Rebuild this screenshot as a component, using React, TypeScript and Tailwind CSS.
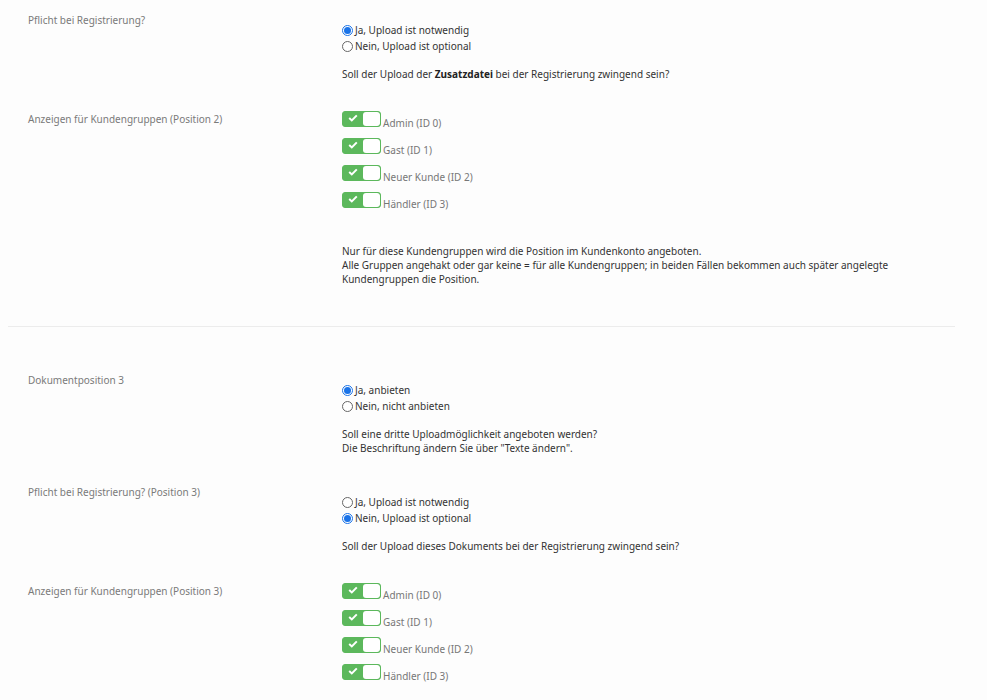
import React from "react";

function Radio({ checked, label }: { checked?: boolean; label: string }) {
  return (
    <div className="flex h-4 items-center">
      {checked ? (
        <span className="flex h-[11px] w-[11px] shrink-0 items-center justify-center rounded-full border border-[#1a73e8] bg-white">
          <span className="h-[7px] w-[7px] rounded-full bg-[#1a73e8]" />
        </span>
      ) : (
        <span className="h-[11px] w-[11px] shrink-0 rounded-full border border-[#666] bg-white" />
      )}
      <span className="ml-[2px] text-[#333]">{label}</span>
    </div>
  );
}

function Toggle({ label }: { label: string }) {
  return (
    <div className="h-[27px] leading-4">
      <span className="inline-block h-4 w-[39px] overflow-hidden rounded-[3px] border border-[#5cb85c] bg-[#5cb85c] align-baseline">
        <span className="flex h-full">
          <span className="flex w-[20px] items-center justify-center">
            <svg width="10" height="8" viewBox="0 0 10 8" className="-mt-[2px]">
              <path d="M1.2 4 L3.8 6.4 L8.8 1.4" fill="none" stroke="white" strokeWidth="2" />
            </svg>
          </span>
          <span className="flex-1 rounded-[3px] bg-white" />
        </span>
      </span>
      <span className="ml-[2px] text-[#777]">{label}</span>
    </div>
  );
}

function Row({
  label,
  children,
  className,
  contentClass,
}: {
  label: string;
  children: React.ReactNode;
  className?: string;
  contentClass?: string;
}) {
  return (
    <div className={"flex " + (className ?? "")}>
      <div className="w-[334px] shrink-0 pl-5 leading-4 text-[#7a7a7a]">{label}</div>
      <div className={"w-[585px] " + (contentClass ?? "")}>{children}</div>
    </div>
  );
}

const groups = ["Admin (ID 0)", "Gast (ID 1)", "Neuer Kunde (ID 2)", "Händler (ID 3)"];

export default function App() {
  return (
    <div
      className="min-h-screen bg-[#fdfdfd] text-[10px]"
      style={{ fontFamily: '"Noto Sans", "Open Sans", sans-serif' }}
    >
      <div className="w-[963px] px-2 pb-6">
        <Row label="Pflicht bei Registrierung?" className="pt-3" contentClass="pt-[10px]">
          <Radio checked label="Ja, Upload ist notwendig" />
          <Radio label="Nein, Upload ist optional" />
          <p className="mt-[13px] leading-[14px] text-[#333]">
            Soll der Upload der <b className="font-bold text-[#222]">Zusatzdatei</b> bei der Registrierung zwingend sein?
          </p>
        </Row>

        <Row label="Anzeigen für Kundengruppen (Position 2)" className="mt-[30px]">
          {groups.map((g) => (
            <Toggle key={g} label={g} />
          ))}
          <p className="mt-[25px] leading-[14px] text-[#333]">
            Nur für diese Kundengruppen wird die Position im Kundenkonto angeboten.
            <br />
            Alle Gruppen angehakt oder gar keine = für alle Kundengruppen; in beiden Fällen bekommen auch später angelegte Kundengruppen die Position.
          </p>
        </Row>

        <div className="mt-[40px] h-px bg-[#ececec]" />

        <Row label="Dokumentposition 3" className="mt-[45px]" contentClass="pt-[10px]">
          <Radio checked label="Ja, anbieten" />
          <Radio label="Nein, nicht anbieten" />
          <p className="mt-[13px] leading-[14px] text-[#333]">
            Soll eine dritte Uploadmöglichkeit angeboten werden?
            <br />
            Die Beschriftung ändern Sie über "Texte ändern".
          </p>
        </Row>

        <Row label="Pflicht bei Registrierung? (Position 3)" className="mt-[29px]" contentClass="pt-[10px]">
          <Radio label="Ja, Upload ist notwendig" />
          <Radio checked label="Nein, Upload ist optional" />
          <p className="mt-[13px] leading-[14px] text-[#333]">
            Soll der Upload dieses Dokuments bei der Registrierung zwingend sein?
          </p>
        </Row>

        <Row label="Anzeigen für Kundengruppen (Position 3)" className="mt-[30px]">
          {groups.map((g) => (
            <Toggle key={g} label={g} />
          ))}
        </Row>
      </div>
    </div>
  );
}
